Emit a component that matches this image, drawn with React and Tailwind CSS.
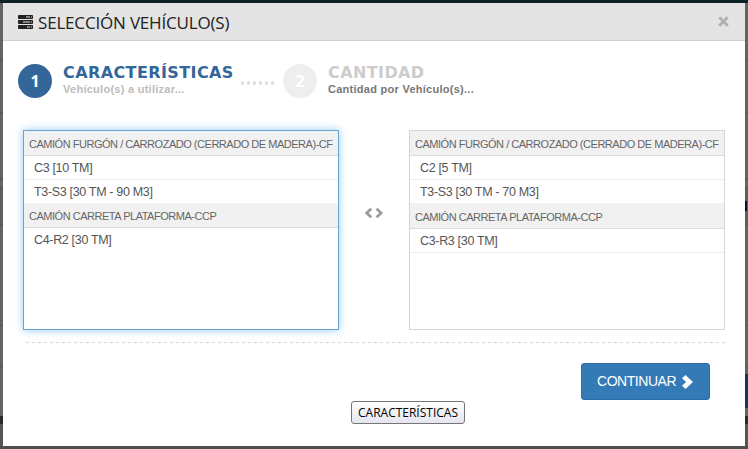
import React from "react";

const ARIAL = "font-['Liberation_Sans',Arial,sans-serif]";

const available = [
  { type: "group", text: "CAMIÓN FURGÓN / CARROZADO (CERRADO DE MADERA)-CF", size: "h-[25px] pt-0.5" },
  { type: "item", text: "C3 [10 TM]", size: "h-6 pt-0.5 border-b border-[#eeeeee]" },
  { type: "item", text: "T3-S3 [30 TM - 90 M3]", size: "h-[23px] pt-0.5" },
  { type: "group", text: "CAMIÓN CARRETA PLATAFORMA-CCP", size: "h-[25px] pt-0.5" },
  { type: "item", text: "C4-R2 [30 TM]", size: "h-6" },
];

const selected = [
  { type: "group", text: "CAMIÓN FURGÓN / CARROZADO (CERRADO DE MADERA)-CF", size: "h-[25px] pt-0.5" },
  { type: "item", text: "C2 [5 TM]", size: "h-6 pt-0.5 border-b border-[#eeeeee]" },
  { type: "item", text: "T3-S3 [30 TM - 70 M3]", size: "h-[23px] pt-0.5" },
  { type: "group", text: "CAMIÓN CARRETA PLATAFORMA-CCP", size: "h-[26px] pt-[3px]" },
  { type: "item", text: "C3-R3 [30 TM]", size: "h-6 pt-0.5 border-b border-[#eeeeee]" },
];

function List({ rows, className }) {
  return (
    <ul className={`h-[200px] w-[316px] shrink-0 border bg-white ${className}`}>
      {rows.map((row, i) =>
        row.type === "group" ? (
          <li key={i} className={`flex items-center border-b border-[#dddddd] bg-[#f1f1f1] pl-[5px] text-[11px] tracking-[-0.475px] text-[#666666] ${row.size}`}>
            <span className="whitespace-nowrap">{row.text}</span>
          </li>
        ) : (
          <li key={i} className={`flex items-center pl-2.5 text-[12.5px] tracking-[-0.33px] text-[#555555] ${row.size}`}>
            <span className="whitespace-nowrap">{row.text}</span>
          </li>
        )
      )}
    </ul>
  );
}

function ServerIcon() {
  return (
    <svg className="mt-px h-[14px] w-[15px] shrink-0" viewBox="0 0 15 14">
      <g fill="#222222">
        <rect x="0" y="0" width="15" height="4" rx="0.8" />
        <rect x="0" y="5" width="15" height="4" rx="0.8" />
        <rect x="0" y="10" width="15" height="4" rx="0.8" />
      </g>
      <g fill="#e4e4e4">
        <rect x="8" y="1.5" width="4" height="1" />
        <rect x="5" y="6.5" width="7" height="1" />
        <rect x="9" y="11.5" width="3" height="1" />
        <rect x="13" y="1.5" width="1" height="1" />
        <rect x="13" y="6.5" width="1" height="1" />
        <rect x="13" y="11.5" width="1" height="1" />
      </g>
    </svg>
  );
}

function Edge({ right }) {
  return (
    <div className="flex w-[3px] shrink-0 flex-col overflow-hidden bg-[#636363]">
      <div className="h-[58px] border-b border-[#555555]" />
      <div className="h-[52px] border-b border-[#555555]" />
      <div className="h-[67px] border-b border-[#505050]" />
      <div className="h-2 border-b border-[#505050] bg-[#666666]" />
      <div className="h-[37px] border-b border-[#555555] bg-[#5c5e60] pt-[13px]">
        {right && <div className="h-[10px] w-0.5 bg-[#111122]" />}
      </div>
      <div className="h-[101px] border-b border-[#555555]" />
      <div className="h-[41px] border-b border-[#555555]" />
      <div className="h-[7px]" />
      <div className={`h-[34px] ${right ? "bg-[#153653]" : ""}`} />
      <div className="h-2" />
      <div className="h-2 bg-[#2b2b2b]" />
      <div className="flex-1 bg-[#555555]" />
    </div>
  );
}

export default function App() {
  return (
    <div className={`relative flex h-[449px] w-[748px] flex-col overflow-hidden bg-[#505050] ${ARIAL}`}>
      <div className="h-[3px] shrink-0 bg-[#0b2226]" />
      <div className="flex h-[443px] shrink-0">
        <Edge />
        <main className="flex w-[742px] flex-col bg-white">
          <header className="flex h-[38px] shrink-0 items-center border-b border-[#d2d2d2] bg-[#e4e4e4] pl-[15px] pr-4">
            <ServerIcon />
            <h1 className="ml-[5px] mt-0.5 whitespace-nowrap font-['Open_Sans',sans-serif] text-[17px] tracking-[-0.18px] text-[#222222]">SELECCIÓN VEHÍCULO(S)</h1>
            <svg className="ml-auto h-[11px] w-[11px]" viewBox="0 0 11 11">
              <path d="M1.3 1.3 9.7 9.7M9.7 1.3 1.3 9.7" stroke="#b0b0b0" strokeWidth="3" />
            </svg>
          </header>

          <div className="flex h-[89px] shrink-0 pl-[15px] pt-[22px]">
            <div className="mt-px flex h-[34px] w-[34px] items-center justify-center rounded-full bg-[#336699] font-['Open_Sans',sans-serif] text-base font-bold text-white">1</div>
            <div className="ml-[11px] w-[178px] whitespace-nowrap">
              <h2 className="pt-px font-['DejaVu_Sans','Verdana',sans-serif] text-[16px] font-bold leading-[18px] tracking-[0.4px] text-[#336699]">CARACTERÍSTICAS</h2>
              <p className="text-[11px] font-bold leading-[15px] tracking-[0.27px] text-[#bbbbbb]">Vehículo(s) a utilizar...</p>
            </div>
            <div className="mt-[18px] flex w-[34px] gap-[3px]">
              {[0, 1, 2, 3, 4, 5].map((n) => (
                <i key={n} className="h-[4px] w-[3px] rounded-full bg-[#dddddd]" />
              ))}
            </div>
            <div className="ml-2 mt-px flex h-[34px] w-[34px] items-center justify-center rounded-full bg-[#eeeeee] font-['Open_Sans',sans-serif] text-base font-bold text-white">2</div>
            <div className="ml-[11px] whitespace-nowrap">
              <h2 className="pt-px font-['DejaVu_Sans','Verdana',sans-serif] text-[16px] font-bold leading-[18px] tracking-[0.4px] text-[#cccccc]">CANTIDAD</h2>
              <p className="text-[11px] font-bold leading-[15px] tracking-[0.27px] text-[#777777]">Cantidad por Vehículo(s)...</p>
            </div>
          </div>

          <section className="flex h-[200px] shrink-0 pl-5">
            <List rows={available} className="border-[#66a5cf] shadow-[0_0_8px_rgba(82,168,236,0.6)]" />
            <div className="flex w-[70px] items-start justify-center pt-[77px]">
              <svg className="h-[12px] w-[20px]" viewBox="0 0 20 12" fill="none" stroke="#999999" strokeWidth="2.6">
                <path d="M7.2 1.7 2.6 6l4.6 4.3M12.6 1.7 17.2 6l-4.6 4.3" />
              </svg>
            </div>
            <List rows={selected} className="border-[#d5d5d5]" />
          </section>

          <svg className="ml-[23px] mt-3 h-px w-[700px] shrink-0" viewBox="0 0 700 1">
            <path d="M0 .5H700" stroke="#d5d5d5" strokeDasharray="3 3" />
          </svg>

          <footer className="mt-5 flex justify-end pr-[35px]">
            <button className="flex h-[37px] w-[129px] items-center rounded-[3px] border border-[#2e6da4] bg-[#337ab7] pl-[15px] text-[14px] tracking-[-0.45px] text-white">
              CONTINUAR
              <svg className="ml-[6px] h-[14px] w-[12px]" viewBox="0 0 12 14">
                <path d="M0 3.2 3.5 0 11 6.9l-7.5 7L0 10.8l4.1-3.9z" fill="#fff" />
              </svg>
            </button>
          </footer>
        </main>
        <Edge right />
      </div>

      <div className="absolute left-[351px] top-[401px] flex h-[23px] w-[114px] items-center justify-center rounded-[3px] border border-[#767676] bg-linear-to-b from-white to-[#e4e5f0] font-['Open_Sans',sans-serif] text-[12px] text-black">
        <span className="whitespace-nowrap">CARACTERÍSTICAS</span>
      </div>
    </div>
  );
}
